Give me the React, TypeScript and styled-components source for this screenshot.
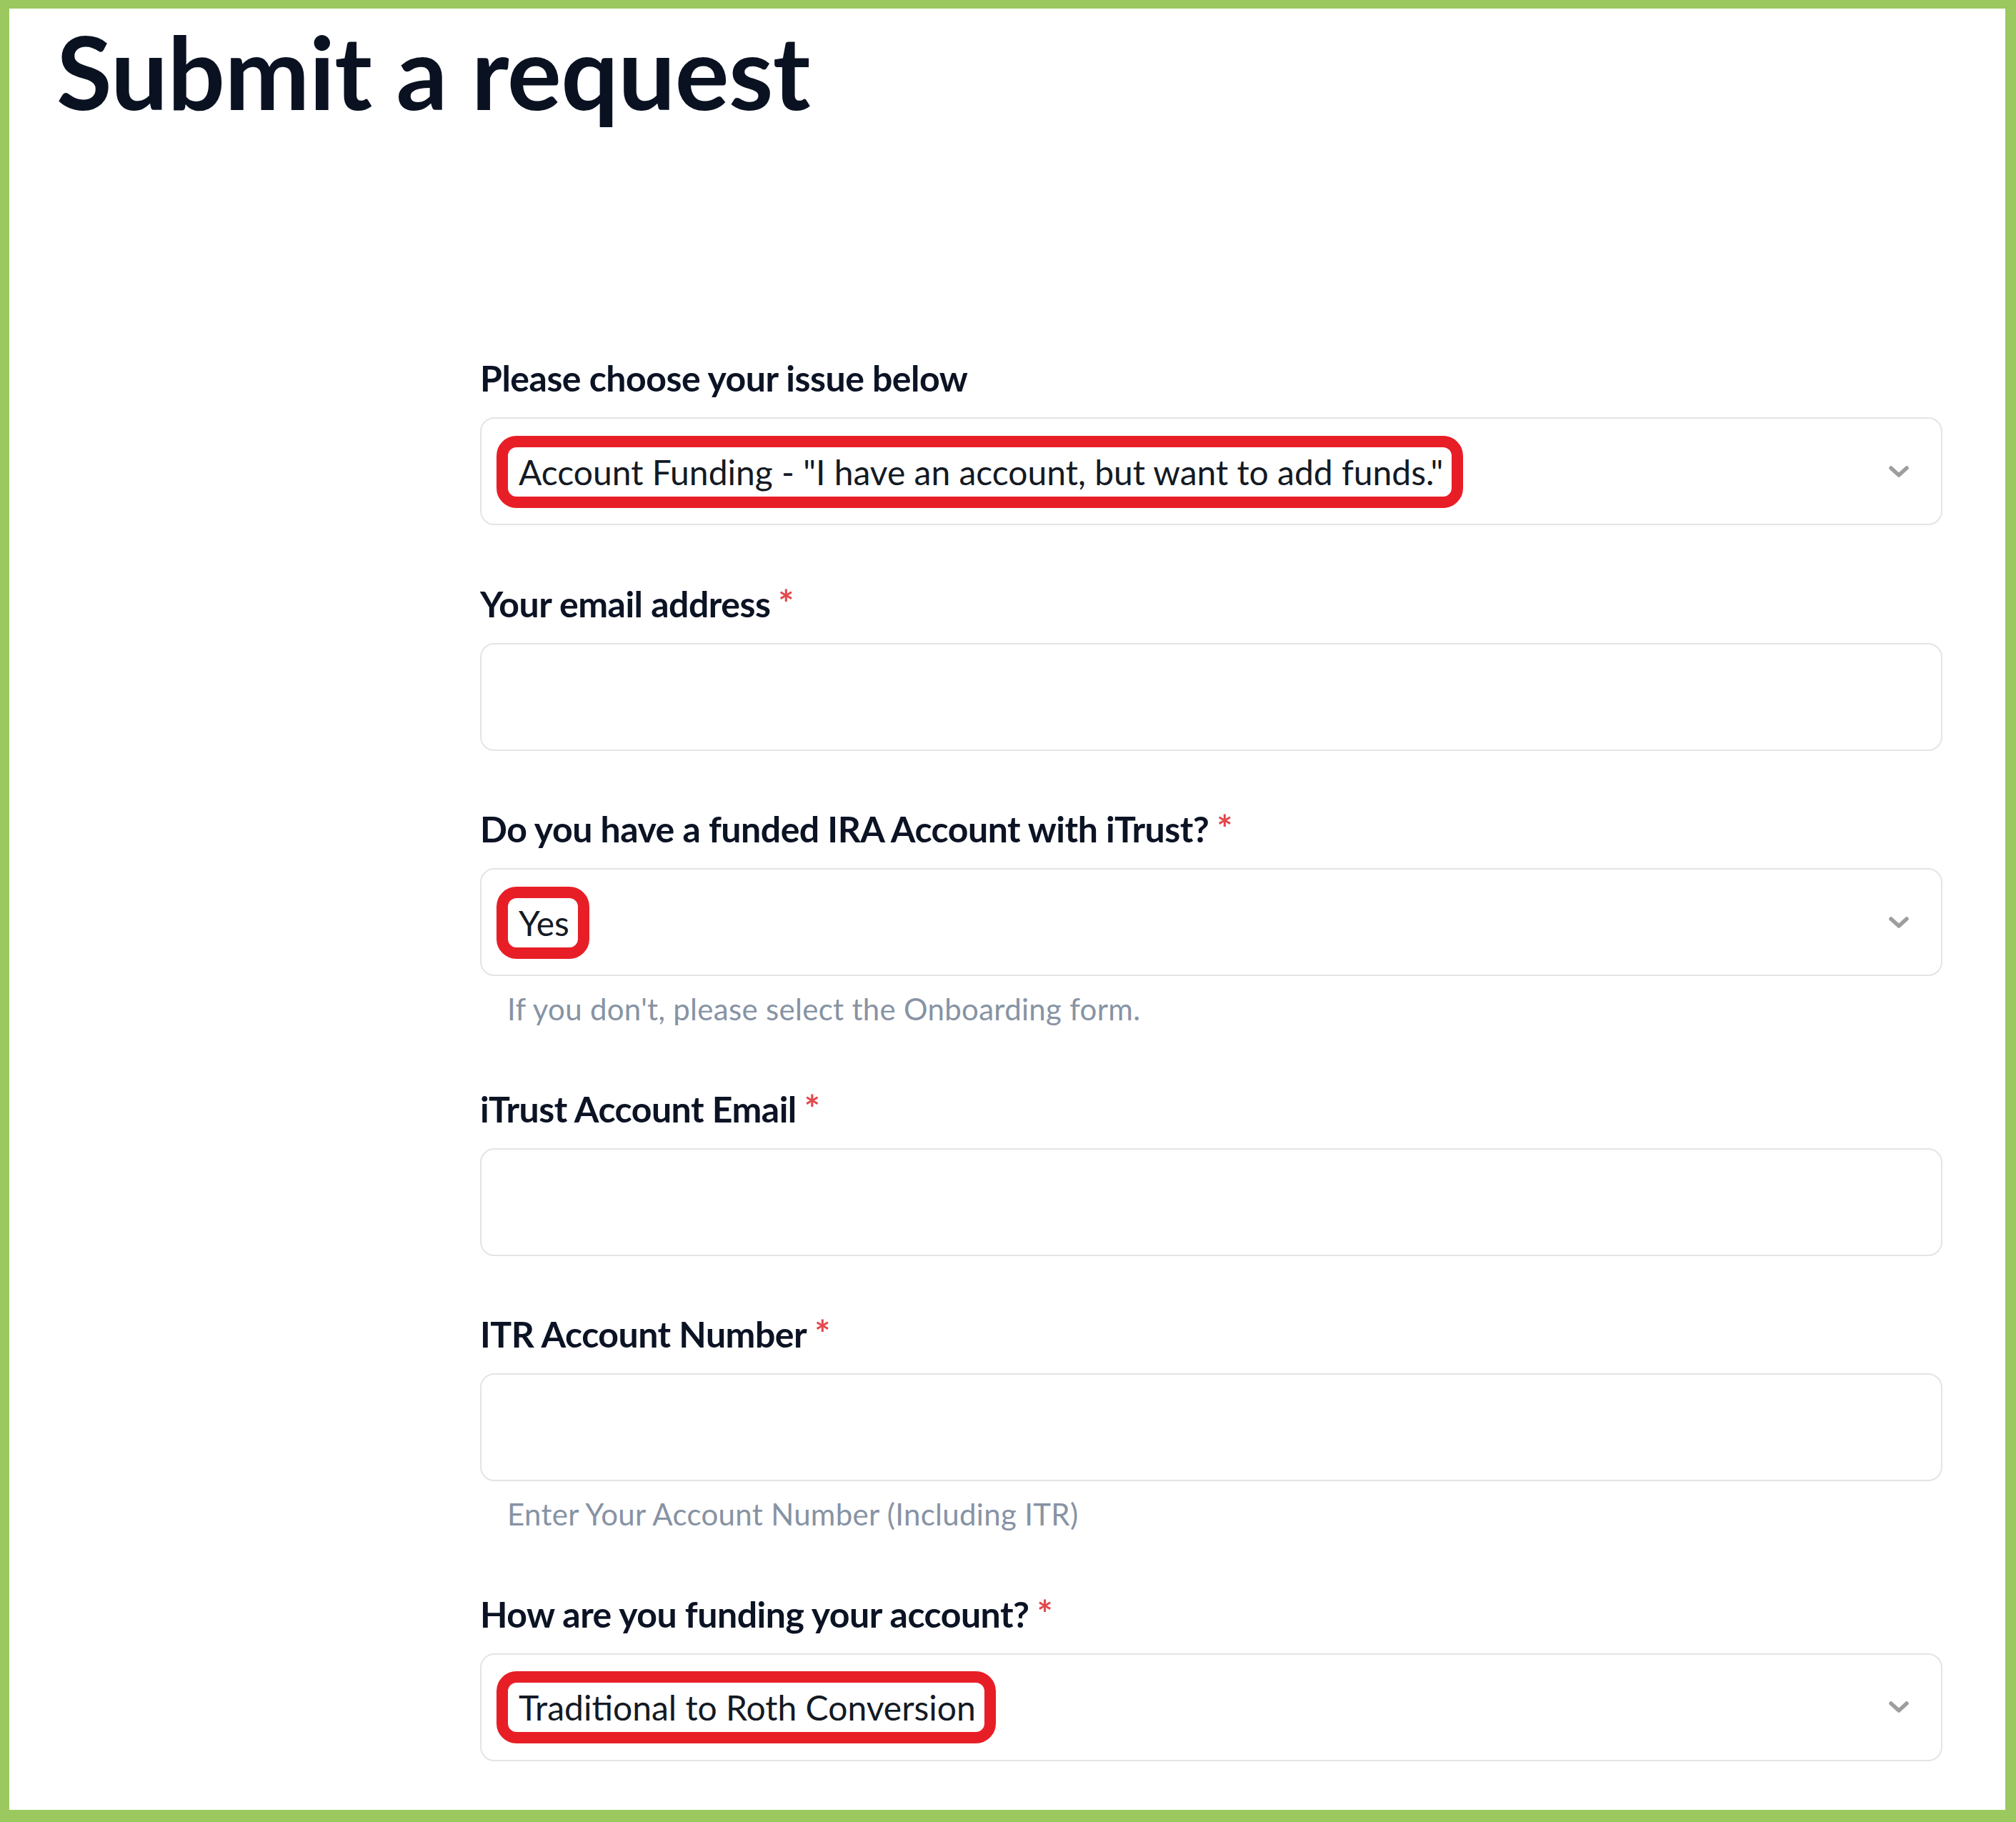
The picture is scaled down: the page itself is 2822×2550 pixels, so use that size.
import React from "react";
import styled, { createGlobalStyle } from "styled-components";

const GlobalStyle = createGlobalStyle`
  html, body {
    margin: 0;
    padding: 0;
    background: #ffffff;
  }
  body {
    font-family: Lato, "Open Sans", Arial, sans-serif;
    -webkit-font-smoothing: antialiased;
  }
  * { box-sizing: border-box; }
`;

const Frame = styled.div`
  width: 2822px;
  height: 2550px;
  border-style: solid;
  border-color: #9bc960;
  border-width: 12px 15px 17px 13px;
  background: #ffffff;
  overflow: hidden;
  display: flex;
  flex-direction: column;
`;

const Title = styled.h1`
  margin: 2px 0 0 66px;
  font-family: Lato, sans-serif;
  font-weight: 700;
  font-size: 142px;
  line-height: 170px;
  color: #0a1222;
  letter-spacing: -0.6px;
`;

const Form = styled.form`
  margin: 310px 0 0 659px;
  width: 2047px;
  display: flex;
  flex-direction: column;
`;

const Field = styled.div`
  display: flex;
  flex-direction: column;
  margin-bottom: 74.5px;
`;

const Label = styled.label`
  display: block;
  height: 70px;
  font-family: Lato, sans-serif;
  font-weight: 700;
  font-size: 50px;
  line-height: 70px;
  letter-spacing: -0.5px;
  color: #0b1324;
  margin-bottom: 20px;
`;

const Required = styled.span`
  font-weight: 700;
  font-size: 52px;
  line-height: 0;
  color: #e2474c;
  margin-left: 11px;
`;

const Box = styled.div`
  height: 151px;
  border: 2px solid #e3e4e6;
  border-radius: 20px;
  background: #ffffff;
  display: flex;
  align-items: center;
  justify-content: space-between;
  padding: 0 44px 0 52px;
`;

const Value = styled.span`
  position: relative;
  display: inline-block;
  font-family: Lato, sans-serif;
  font-weight: 400;
  font-size: 48px;
  line-height: 58px;
  color: #141a24;
  margin-top: 2px;

  &::before {
    content: "";
    position: absolute;
    top: -22px;
    bottom: -21px;
    left: -31px;
    right: -28px;
    border: 16px solid #e81e27;
    border-radius: 28px;
    pointer-events: none;
  }
`;

const Chevron = styled.svg`
  width: 30px;
  height: 20px;
  flex: none;
`;

const Hint = styled.div`
  font-family: Lato, sans-serif;
  font-weight: 400;
  font-size: 42px;
  line-height: 60px;
  letter-spacing: 0.3px;
  color: #8793a4;
  margin-top: 16px;
  padding-left: 38px;
`;

type FieldDef = {
  label: string;
  required?: boolean;
  kind: "select" | "input";
  value?: string;
  hint?: string;
};

const fields: FieldDef[] = [
  {
    label: "Please choose your issue below",
    kind: "select",
    value: 'Account Funding - "I have an account, but want to add funds."',
  },
  { label: "Your email address", required: true, kind: "input" },
  {
    label: "Do you have a funded IRA Account with iTrust?",
    required: true,
    kind: "select",
    value: "Yes",
    hint: "If you don't, please select the Onboarding form.",
  },
  { label: "iTrust Account Email", required: true, kind: "input" },
  {
    label: "ITR Account Number",
    required: true,
    kind: "input",
    hint: "Enter Your Account Number (Including ITR)",
  },
  {
    label: "How are you funding your account?",
    required: true,
    kind: "select",
    value: "Traditional to Roth Conversion",
  },
];

const ChevronIcon = () => (
  <Chevron viewBox="0 0 30 20" aria-hidden="true">
    <path
      d="M4 5 L15 15 L26 5"
      fill="none"
      stroke="#9e9e9e"
      strokeWidth="5.5"
      strokeLinecap="round"
      strokeLinejoin="round"
    />
  </Chevron>
);

export default function App() {
  return (
    <>
      <GlobalStyle />
      <Frame>
        <Title>Submit a request</Title>
        <Form onSubmit={(e) => e.preventDefault()}>
          {fields.map((f) => (
            <Field key={f.label}>
              <Label>
                {f.label}
                {f.required && <Required>*</Required>}
              </Label>
              <Box>
                {f.kind === "select" ? (
                  <>
                    <Value>{f.value}</Value>
                    <ChevronIcon />
                  </>
                ) : null}
              </Box>
              {f.hint && <Hint>{f.hint}</Hint>}
            </Field>
          ))}
        </Form>
      </Frame>
    </>
  );
}
